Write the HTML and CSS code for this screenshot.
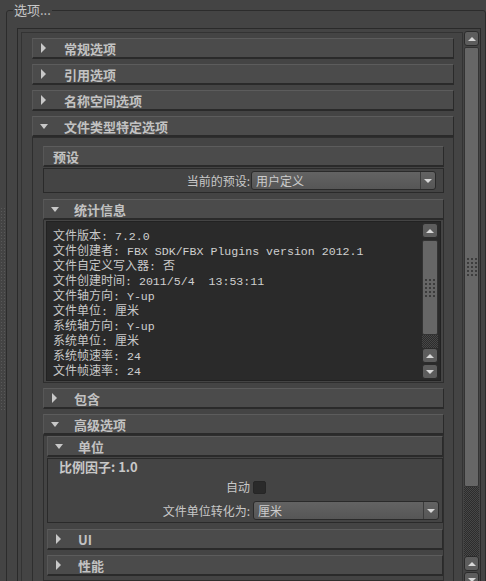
FILE: index.html
```html
<!DOCTYPE html>
<html lang="zh-CN">
<head>
    <meta charset="UTF-8">
    <title>选项</title>
    <link rel="stylesheet" href="styles.css">
</head>
<body>
    <div class="side-grip-col"><div class="side-grip"></div></div>

    <fieldset class="group">
        <legend>选项...</legend>

        <div class="scroll-frame">
            <div class="viewport">
                <div class="hdr top"><span class="tri right"></span>常规选项</div>
                <div class="hdr top"><span class="tri right"></span>引用选项</div>
                <div class="hdr top"><span class="tri right"></span>名称空间选项</div>
                <div class="hdr top"><span class="tri down"></span>文件类型特定选项</div>

                <div class="sect-body">
                    <div class="hdr plain">预设</div>
                    <div class="box preset">
                        <label class="form-label">当前的预设:</label>
                        <div class="combo">
                            <span class="combo-text">用户定义</span>
                            <span class="combo-btn"><span class="arr-down"></span></span>
                        </div>
                    </div>

                    <div class="hdr gap-6"><span class="tri down"></span>统计信息</div>
                    <div class="stats-frame">
                        <div class="textarea">
                            <div class="stats">
                                <div class="line">文件版本<span class="v">: 7.2.0</span></div>
                                <div class="line">文件创建者<span class="v">: FBX SDK/FBX Plugins version 2012.1</span></div>
                                <div class="line">文件自定义写入器<span class="v">: </span>否</div>
                                <div class="line">文件创建时间<span class="v">: 2011/5/4  13:53:11</span></div>
                                <div class="line">文件轴方向<span class="v">: Y-up</span></div>
                                <div class="line">文件单位<span class="v">: </span>厘米</div>
                                <div class="line">系统轴方向<span class="v">: Y-up</span></div>
                                <div class="line">系统单位<span class="v">: </span>厘米</div>
                                <div class="line">系统帧速率<span class="v">: 24</span></div>
                                <div class="line">文件帧速率<span class="v">: 24</span></div>
                            </div>
                            <div class="vscroll small">
                                <div class="sb-btn"><span class="arr-up"></span></div>
                                <div class="sb-thumb"><span class="dots"></span></div>
                                <div class="sb-track"></div>
                                <div class="sb-btn"><span class="arr-up"></span></div>
                                <div class="sb-btn"><span class="arr-down"></span></div>
                            </div>
                        </div>
                    </div>

                    <div class="hdr gap"><span class="tri right"></span>包含</div>
                    <div class="hdr"><span class="tri down"></span>高级选项</div>

                    <div class="sub-body">
                        <div class="hdr"><span class="tri down"></span>单位</div>
                        <div class="box units">
                            <div class="scale">比例因子: 1.0</div>
                            <div class="form-row check-row">
                                <label class="form-label">自动</label>
                                <span class="checkbox"></span>
                            </div>
                            <div class="form-row combo-row">
                                <label class="form-label">文件单位转化为:</label>
                                <div class="combo">
                                    <span class="combo-text">厘米</span>
                                    <span class="combo-btn"><span class="arr-down"></span></span>
                                </div>
                            </div>
                        </div>
                        <div class="hdr gap-6"><span class="tri right"></span>UI</div>
                        <div class="hdr"><span class="tri right"></span>性能</div>
                    </div>
                </div>
            </div>

            <div class="vscroll main">
                <div class="sb-btn"><span class="arr-up"></span></div>
                <div class="sb-thumb"><span class="dots"></span></div>
                <div class="sb-track"></div>
                <div class="sb-btn"><span class="arr-up"></span></div>
                <div class="sb-btn"><span class="arr-down"></span></div>
            </div>
        </div>
    </fieldset>
</body>
</html>
```

FILE: styles.css
```css
* {
    box-sizing: border-box;
}
body {
    margin: 0;
    padding-top: 2px;
    height: 581px;
    overflow: hidden;
    display: flex;
    align-items: flex-start;
    background-color: #444;
    color: #c8c8c8;
    font-family: "Noto Sans CJK SC", "Liberation Sans", sans-serif;
    font-size: 12px;
}

/* left splitter handle */
.side-grip-col {
    width: 6px;
    flex: none;
    padding-top: 206px;
}
.side-grip {
    width: 4px;
    height: 204px;
    margin-left: 1px;
    background: conic-gradient(at 1px 1px, transparent 75%, #595959 0) 0 0 / 3px 3px;
}

/* group box */
.group {
    flex: 1;
    min-width: 0;
    height: 640px;
    margin: 0;
    padding: 10px 4px 0 10px;
    border: 1px solid #2c2c2c;
    border-radius: 3px;
}
.group legend {
    margin-left: -4px;
    padding: 0 1px;
    font-size: 13px;
    line-height: 16px;
    color: #c8c8c8;
}

.scroll-frame {
    display: flex;
    height: 570px;
    border: 1px solid #2a2a2a;
    padding: 2px 1px 0 3px;
}
.viewport {
    flex: 1;
    min-width: 0;
    margin: 1px 1px 0 0;
    border: 1px solid #333;
    padding: 5px 8px 0 10px;
    display: flex;
    flex-direction: column;
    overflow: hidden;
}

/* collapsible headers */
.hdr {
    flex: none;
    display: flex;
    align-items: center;
    height: 21px;
    background-color: #4b4b4b;
    border-top: 1px solid #5c5c5c;
    border-left: 1px solid #575757;
    border-right: 1px solid #2a2a2a;
    border-bottom: 2px solid #2a2a2a;
    font-size: 13px;
    font-weight: bold;
    color: #c2c2c2;
    white-space: nowrap;
}
.hdr + .hdr {
    margin-top: 5px;
}
.hdr.gap {
    margin-top: 5px;
}
.hdr.gap-6 {
    margin-top: 6px;
}
.hdr.plain {
    padding-left: 9px;
}
.tri {
    width: 9px;
    margin: 0 15px 0 6px;
    display: flex;
    justify-content: center;
}
.hdr.top .tri {
    margin-right: 16px;
}
.tri.right::before {
    content: "";
    border-left: 5px solid #c8c8c8;
    border-top: 5px solid transparent;
    border-bottom: 5px solid transparent;
}
.tri.down::before {
    content: "";
    border-top: 5px solid #c8c8c8;
    border-left: 4px solid transparent;
    border-right: 4px solid transparent;
}

.sect-body {
    flex: none;
    display: flex;
    flex-direction: column;
    border: 1px solid #2e2e2e;
    padding: 8px 9px 8px 10px;
}
.sub-body {
    flex: none;
    display: flex;
    flex-direction: column;
    border: 1px solid #2e2e2e;
    padding: 0 0 4px 3px;
}

/* framed content boxes */
.box {
    flex: none;
    margin-top: 1px;
    border: 1px solid #2a2a2a;
}
.box.preset {
    display: grid;
    grid-template-columns: 206px 1fr;
    column-gap: 1px;
    align-items: center;
    height: 25px;
    padding: 2px 7px 2px 0;
}
.box.units {
    height: 65px;
    padding: 0 3px 0 0;
}
.form-label {
    text-align: right;
    line-height: 16px;
    color: #c8c8c8;
    white-space: nowrap;
}
.form-row {
    display: grid;
    grid-template-columns: 202px 1fr;
    column-gap: 3px;
    align-items: center;
}
.scale {
    padding-left: 11px;
    font-size: 13px;
    font-weight: bold;
    line-height: 16px;
    color: #c8c8c8;
}
.check-row {
    margin-top: 4px;
    height: 15px;
}
.combo-row {
    margin-top: 7px;
}
.checkbox {
    width: 13px;
    height: 13px;
    background-color: #2a2a2a;
    border: 1px solid #262626;
    border-radius: 2px;
}

/* combo box */
.combo {
    display: flex;
    height: 19px;
    border: 1px solid #2a2a2a;
    border-radius: 3px;
    background: linear-gradient(#636363, #565656);
}
.combo-text {
    flex: 1;
    padding-left: 4px;
    line-height: 17px;
    color: #cccccc;
}
.combo-btn {
    width: 15px;
    display: flex;
    align-items: center;
    justify-content: center;
    border-left: 1px solid #3c3c3c;
}

.arr-down {
    border-top: 4px solid #d8d8d8;
    border-left: 4px solid transparent;
    border-right: 4px solid transparent;
}
.arr-up {
    border-bottom: 4px solid #d8d8d8;
    border-left: 4px solid transparent;
    border-right: 4px solid transparent;
}

/* statistics text */
.stats-frame {
    flex: none;
    border: 1px solid #2e2e2e;
    border-top: 0;
    padding: 1px 2px 1px 2px;
}
.textarea {
    display: flex;
    height: 160px;
    background-color: #2a2a2a;
    border: 1px solid #222;
}
.stats {
    flex: 1;
    min-width: 0;
    padding: 5px 0 0 6px;
    overflow: hidden;
    font-size: 12px;
    color: #c8c8c8;
}
.stats .line {
    height: 15px;
    line-height: 15px;
    white-space: pre;
}
.stats .v {
    font-family: "Liberation Mono", monospace;
    font-size: 11.6px;
    line-height: 15px;
    color: #cfcfcf;
}

/* scroll bars */
.vscroll {
    flex: none;
    display: flex;
    flex-direction: column;
}
.vscroll.main {
    width: 15px;
}
.vscroll.small {
    width: 16px;
    margin: 1px 2px 0 0;
}
.sb-btn {
    flex: none;
    height: 15px;
    display: flex;
    align-items: center;
    justify-content: center;
    background-color: #5d5d5d;
    border: 1px solid #2b2b2b;
    border-radius: 3px;
}
.sb-btn + .sb-btn {
    margin-top: 1px;
}
.sb-thumb {
    flex: none;
    display: flex;
    align-items: center;
    justify-content: center;
    background-color: #666;
    border: 1px solid #333;
    border-radius: 2px;
}
.main .sb-thumb {
    height: 440px;
    margin-top: 1px;
}
.small .sb-thumb {
    height: 95px;
    margin-top: 2px;
}
.dots {
    width: 10px;
    height: 18px;
    background: conic-gradient(at 2px 2px, transparent 75%, #3c3c3c 0) 0 0 / 4px 4px;
}
.sb-track {
    flex: none;
    background: repeating-conic-gradient(#474747 0 25%, #2c2c2c 0 50%) 0 0 / 2px 2px;
}
.main .sb-track {
    height: 69px;
}
.small .sb-track {
    height: 13px;
}
```
